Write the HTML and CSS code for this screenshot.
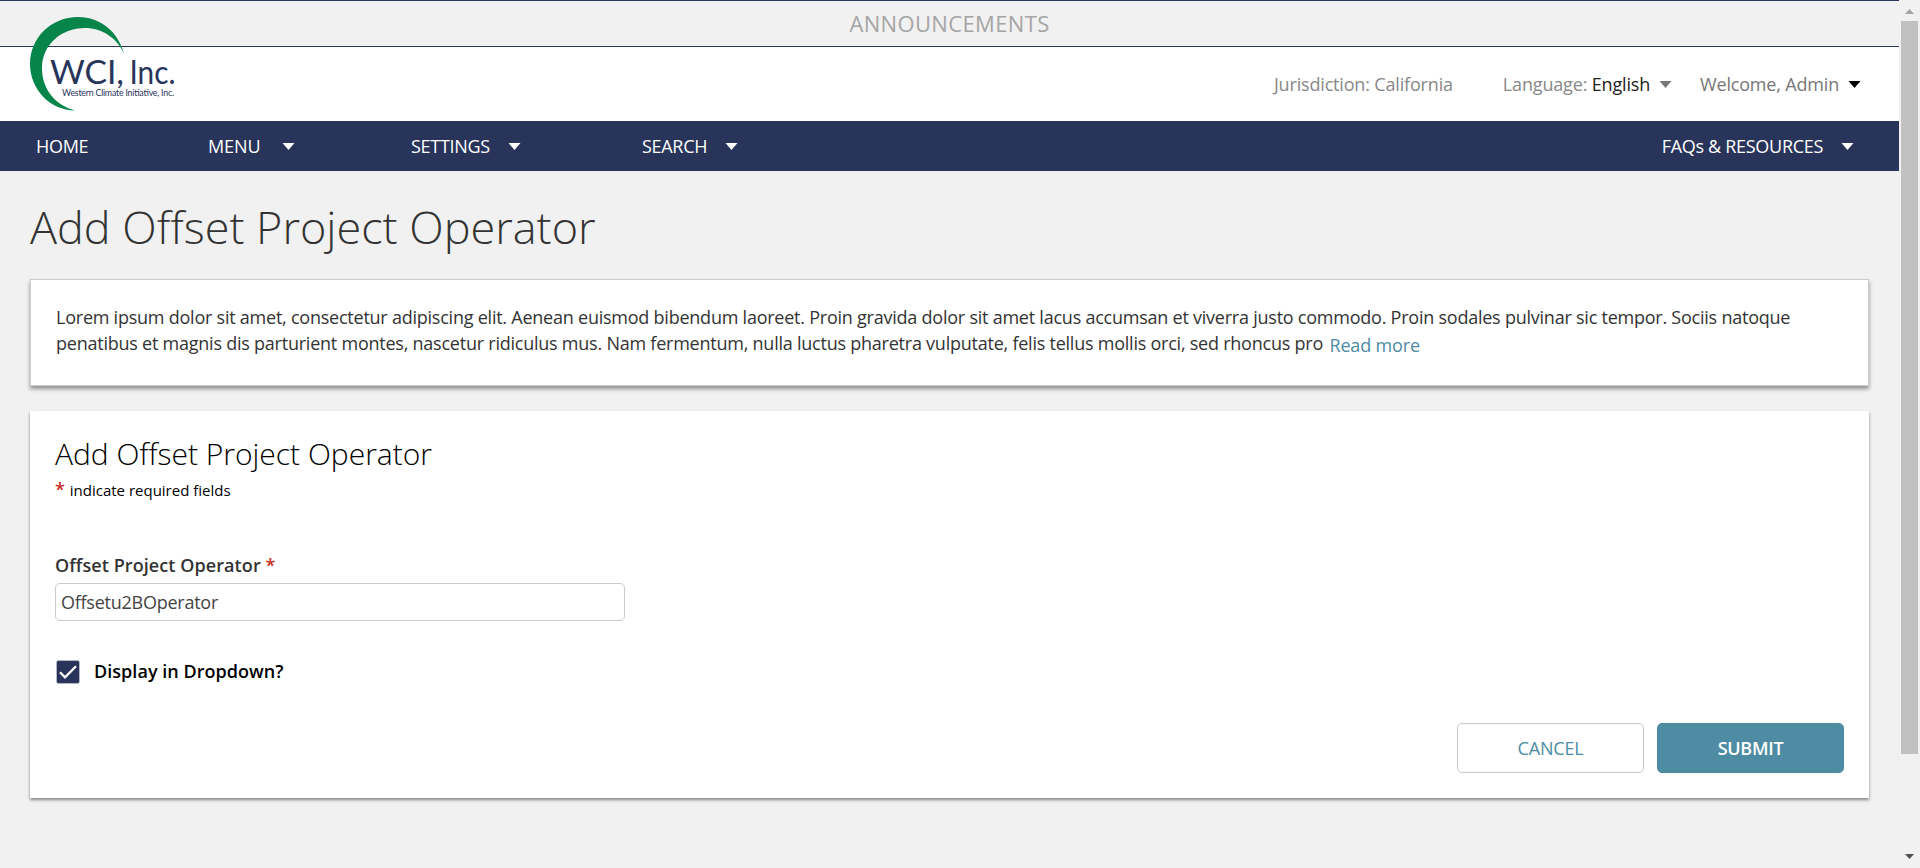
FILE: index.html
```html
<!DOCTYPE html>
<html lang="en">
<head>
<meta charset="utf-8">
<title>Add Offset Project Operator</title>
<link rel="stylesheet" href="styles.css">
</head>
<body>
<div class="page">
  <div class="announce">ANNOUNCEMENTS</div>
  <header class="header">
    <svg class="logo" width="150" height="100" viewBox="28 14 150 100">
      <path fill="#058549" d="M124 53.500C118 32 101 17 78 17C51 17 30 38 30 64C30 89 50 110.500 75 110.500C55 105 42 89 42 68C42 45 61 28 85 28C102 28 117 38 124 53.500Z"/>
      <g fill="#28345a">
        <text class="logo-big" x="50" y="83.500" textLength="74" lengthAdjust="spacingAndGlyphs">WCI,</text>
        <text class="logo-big" x="129.500" y="83.500" textLength="46" lengthAdjust="spacingAndGlyphs">Inc.</text>
        <text class="logo-small" x="62" y="96" textLength="112">Western Climate Initiative, Inc.</text>
      </g>
    </svg>
    <div class="juris">Jurisdiction: California</div>
    <div class="lang">Language: <span class="lang-value">English</span></div>
    <svg class="caret caret-lang" viewBox="0 0 12 7"><path d="M0 0h12L6 7z"/></svg>
    <div class="welcome">Welcome, Admin</div>
    <svg class="caret" viewBox="0 0 12 7"><path d="M0 0h12L6 7z"/></svg>
  </header>
  <nav class="nav">
    <div class="item item-home">HOME</div>
    <div class="item item-menu"><span>MENU</span><svg class="caret" viewBox="0 0 12 7"><path d="M0 0h12L6 7z"/></svg></div>
    <div class="item item-settings"><span>SETTINGS</span><svg class="caret" viewBox="0 0 12 7"><path d="M0 0h12L6 7z"/></svg></div>
    <div class="item item-search"><span>SEARCH</span><svg class="caret" viewBox="0 0 12 7"><path d="M0 0h12L6 7z"/></svg></div>
    <div class="item item-faq"><span>FAQs &amp; RESOURCES</span><svg class="caret" viewBox="0 0 12 7"><path d="M0 0h12L6 7z"/></svg></div>
  </nav>
  <main class="main">
    <h1 class="title">Add Offset Project Operator</h1>
    <section class="intro">Lorem ipsum dolor sit amet, consectetur adipiscing elit. Aenean euismod bibendum laoreet. Proin gravida dolor sit amet lacus accumsan et viverra justo commodo. Proin sodales pulvinar sic tempor. Sociis natoque<br>penatibus et magnis dis parturient montes, nascetur ridiculus mus. Nam fermentum, nulla luctus pharetra vulputate, felis tellus mollis orci, sed rhoncus pro <a class="more">Read more</a></section>
    <section class="form">
      <h2 class="subtitle">Add Offset Project Operator</h2>
      <p class="hint"><span class="star">*</span> indicate required fields</p>
      <label class="label" for="op">Offset Project Operator <span class="req">*</span></label>
      <input class="input" id="op" type="text" value="Offsetu2BOperator">
      <div class="check">
        <svg class="box" width="24" height="24" viewBox="0 0 24 24"><rect x=".5" y=".5" width="23" height="23" rx="2" fill="#28345a" stroke="#b4b8c6"/><path d="M4 12.200L9 17.300L20 6.300" fill="none" stroke="#fff" stroke-width="2.300"/></svg>
        <span>Display in Dropdown?</span>
      </div>
      <div class="actions">
        <button class="btn">CANCEL</button>
        <button class="btn btn-primary">SUBMIT</button>
      </div>
    </section>
  </main>
</div>
<div class="scroll">
  <svg class="arrow" width="9" height="5" viewBox="0 0 9 5"><path d="M0 5h9L4.500 0z" fill="#a3a3a3"/></svg>
  <div class="thumb"></div>
  <svg class="arrow arrow-down" width="9" height="5" viewBox="0 0 9 5"><path d="M0 0h9L4.500 5z" fill="#505050"/></svg>
</div>
</body>
</html>
```
FILE: styles.css
```css
* { box-sizing: border-box; }
body {
  margin: 0;
  height: 868px;
  display: flex;
  overflow: hidden;
  background: #f1f1f1;
  font-family: "Open Sans", sans-serif;
  font-size: 18px;
  color: #333;
}
.page { width: 1899px; }
.announce {
  height: 47px;
  border-top: 1px solid #28345a;
  border-bottom: 1px solid #28345a;
  text-align: center;
  font-size: 22px;
  line-height: 44px;
  letter-spacing: .35px;
  color: #a5a5a5;
}
.header {
  height: 74px;
  background: #fff;
  display: flex;
  align-items: center;
  padding: 0 38px 0 28px;
  color: #777;
  letter-spacing: -.17px;
  white-space: nowrap;
}
.logo { margin: -40px auto 0 0; position: relative; letter-spacing: 0; }
.logo-big { font: 32px Lato, sans-serif; }
.logo-small { font: 8.800px Lato, sans-serif; }
.caret { width: 13px; height: 7px; display: block; fill: #000; flex: none; }
.juris { margin-right: 50px; color: #888; }
.lang { color: #888; }
.lang-value { color: #222; }
.caret-lang { fill: #777; margin: 0 28px 0 9px; }
.welcome { margin-right: 9px; font-weight: 500; letter-spacing: -.18px; }
.nav {
  height: 50px;
  background: #28345a;
  color: #fff;
  display: flex;
  padding: 0 45px 0 36px;
  line-height: 50px;
  letter-spacing: -.3px;
  font-weight: 500;
}
.item { display: flex; align-items: center; gap: 18px; }
.item .caret { fill: #fff; }
.item-home { width: 172px; }
.item-menu { width: 203px; gap: 22px; letter-spacing: -.1px; }
.item-settings { width: 231px; }
.item-faq { margin-left: auto; }
.main { padding: 25px 30px 0; }
.title { margin: 0; font-weight: 300; font-size: 45px; line-height: 62px; color: #333; }
.intro {
  margin-top: 21px;
  height: 107px;
  padding: 24px 25px 0;
  background: #fff;
  border: 1px solid #ccc;
  box-shadow: 0 3px 4px rgba(0, 0, 0, .4);
  line-height: 26px;
  letter-spacing: -.235px;
  white-space: nowrap;
}
.more { color: #4d8ca3; font-weight: 500; margin-left: 2px; position: relative; top: 2px; letter-spacing: -.15px; }
.form {
  margin-top: 25px;
  height: 387px;
  padding: 22px 25px 0;
  background: #fff;
  box-shadow: 0 2px 3px rgba(0, 0, 0, .45);
  display: flex;
  flex-direction: column;
  align-items: flex-start;
}
.subtitle { margin: 0; font-weight: 300; font-size: 30px; line-height: 42px; color: #000; }
.hint { margin: 3px 0 0; font-size: 15px; line-height: 24px; color: #000; }
.star { color: #c72c1c; font-size: 18px; line-height: 1; font-weight: 600; margin-right: 1px; }
.label { margin-top: 50px; font-weight: 600; line-height: 26px; letter-spacing: .08px; }
.req { color: #c72c1c; }
.input {
  margin-top: 5px;
  width: 570px;
  height: 38px;
  padding: 0 5px;
  border: 1px solid #ccc;
  border-radius: 5px;
  font: 18px "Open Sans", sans-serif;
  letter-spacing: -.25px;
  color: #444;
}
.check { margin: 38px 0 0 1px; display: flex; align-items: center; gap: 14px; height: 26px; font-weight: 600; color: #000; }
.check span { padding-bottom: 2px; letter-spacing: .04px; }
.actions { margin: 38px 0 0 auto; display: flex; gap: 13px; }
.btn {
  width: 187px;
  height: 50px;
  padding: 0;
  border: 1px solid #c8c8c8;
  border-radius: 5px;
  background: #fff;
  font: 500 18px "Open Sans", sans-serif;
  letter-spacing: -.2px;
  color: #4d8ca3;
}
.btn-primary { background: #4d8ca3; border-color: #4d8ca3; color: #fff; font-weight: 600; letter-spacing: -.3px; }
.scroll { width: 21px; display: flex; flex-direction: column; align-items: center; padding-top: 9px; }
.thumb { width: 17px; height: 733px; margin-top: 7px; background: #c1c1c1; }
.arrow-down { margin-top: 100px; }
```
